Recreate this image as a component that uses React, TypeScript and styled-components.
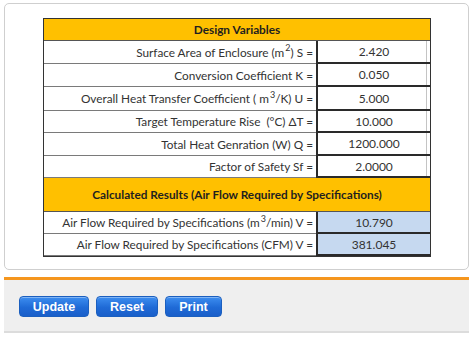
import React from 'react';
import styled, { createGlobalStyle } from 'styled-components';

const GlobalStyle = createGlobalStyle`
  body {
    margin: 0;
    background: #ffffff;
    font-family: Lato, "Open Sans", sans-serif;
  }
`;

const Page = styled.div`
  width: 465px;
  padding: 3px 0 0 4px;
`;

const Card = styled.div`
  box-sizing: border-box;
  height: 267px;
  border: 1px solid #cfcfcf;
  border-radius: 5px;
  background: #fff;
  padding: 14px 0 0 38px;
`;

const Sheet = styled.div`
  width: 386px;
  border: 1px solid #333;
`;

const Row = styled.div<{ $h: number }>`
  display: grid;
  grid-template-columns: 272px 114px;
  height: ${p => p.$h}px;
`;

const Heading = styled.div<{ $h: number }>`
  box-sizing: border-box;
  height: ${p => p.$h}px;
  background: #ffc000;
  border-bottom: 1px solid #555;
  display: flex;
  align-items: center;
  justify-content: center;
  font-weight: 700;
  font-size: 11.8px;
  color: #1f1f1f;
`;

const Label = styled.div`
  box-sizing: border-box;
  border-bottom: 1px solid #7a7a7a;
  display: flex;
  align-items: center;
  justify-content: flex-end;
  padding-right: 3px;
  font-size: 11.8px;
  color: #333;
  white-space: nowrap;

  sup {
    font-size: 9px;
    line-height: 0;
    position: relative;
    top: -4px;
    margin-left: 1px;
  }
`;

const Value = styled.div<{ $result?: boolean }>`
  box-sizing: border-box;
  border-left: 2px solid #2a2a2a;
  border-bottom: 2px solid #2a2a2a;
  background: ${p => (p.$result ? '#c6d9f0' : '#ffffff')};
  box-shadow: ${p => (p.$result ? 'none' : 'inset -3px 0 0 0 #fff, inset -4px 0 0 0 #c4c4c4')};
  display: flex;
  align-items: center;
  justify-content: center;
  font-size: 12px;
  color: #333;
`;

const Rule = styled.div`
  height: 3px;
  margin-top: 7px;
  background: #f5961e;
`;

const ButtonBar = styled.div`
  box-sizing: border-box;
  height: 53px;
  background: #efefef;
  border-bottom: 2px solid #dcdcdc;
  display: flex;
  gap: 7px;
  padding: 16px 0 0 15px;
`;

const Button = styled.button<{ $w: number }>`
  box-sizing: border-box;
  width: ${p => p.$w}px;
  height: 21px;
  padding: 0;
  border: 1px solid #1b5fbf;
  border-radius: 4px;
  background: linear-gradient(#3d8ef0, #1f6ad6 55%, #1a5fc9);
  box-shadow: inset 0 1px 0 rgba(255, 255, 255, 0.35);
  color: #fff;
  font-family: "Liberation Sans", Arial, sans-serif;
  font-weight: 700;
  font-size: 12.5px;
  cursor: pointer;
`;

type Item = { label: React.ReactNode; value: string; h: number };

const inputs: Item[] = [
  { label: <>Surface Area of Enclosure (m<sup>2</sup>) S =</>, value: '2.420', h: 23 },
  { label: <>Conversion Coefficient K =</>, value: '0.050', h: 23 },
  { label: <>Overall Heat Transfer Coefficient ( m<sup>3</sup>/K) U =</>, value: '5.000', h: 24 },
  { label: <>Target Temperature Rise&nbsp; (°C) ΔT =</>, value: '10.000', h: 22 },
  { label: <>Total Heat Genration (W) Q =</>, value: '1200.000', h: 23 },
  { label: <>Factor of Safety Sf =</>, value: '2.0000', h: 22 },
];

const results: Item[] = [
  { label: <>Air Flow Required by Specifications (m<sup>3</sup>/min) V =</>, value: '10.790', h: 22 },
  { label: <>Air Flow Required by Specifications (CFM) V =</>, value: '381.045', h: 22 },
];

export default function App() {
  return (
    <Page>
      <GlobalStyle />
      <Card>
        <Sheet>
          <Heading $h={22}>Design Variables</Heading>
          {inputs.map((it, i) => (
            <Row key={i} $h={it.h}>
              <Label>{it.label}</Label>
              <Value>{it.value}</Value>
            </Row>
          ))}
          <Heading $h={34}>Calculated Results (Air Flow Required by Specifications)</Heading>
          {results.map((it, i) => (
            <Row key={i} $h={it.h}>
              <Label>{it.label}</Label>
              <Value $result>{it.value}</Value>
            </Row>
          ))}
        </Sheet>
      </Card>
      <Rule />
      <ButtonBar>
        <Button $w={70}>Update</Button>
        <Button $w={62}>Reset</Button>
        <Button $w={57}>Print</Button>
      </ButtonBar>
    </Page>
  );
}
